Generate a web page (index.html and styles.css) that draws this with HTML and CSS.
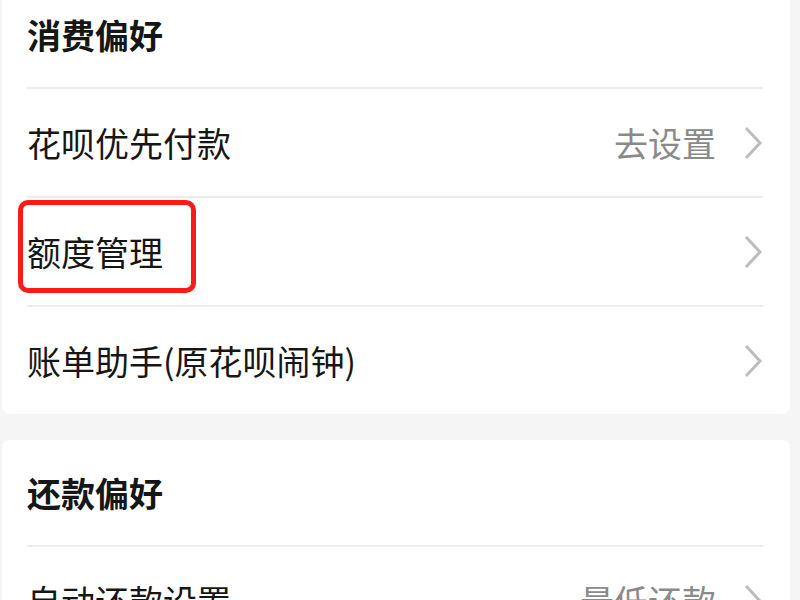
FILE: index.html
```html
<!DOCTYPE html>
<html lang="zh-CN">
<head>
	<meta charset="UTF-8">
	<title>设置</title>
	<link rel="stylesheet" href="styles.css">
</head>
<body>
	<!-- 消费偏好 -->
	<div class="card card_first">
		<div class="card_title">消费偏好</div>
		<div class="row">
			<span class="row_name">花呗优先付款</span>
			<span class="row_value">去设置</span>
			<svg class="arrow" width="20" height="34" viewBox="0 0 20 34"><polyline points="3,2 17,17 3,32" fill="none" stroke="#bdbdbd" stroke-width="3"/></svg>
		</div>
		<div class="row">
			<span class="row_name">额度管理</span>
			<span class="mark"></span>
			<svg class="arrow" width="20" height="34" viewBox="0 0 20 34"><polyline points="3,2 17,17 3,32" fill="none" stroke="#bdbdbd" stroke-width="3"/></svg>
		</div>
		<div class="row">
			<span class="row_name">账单助手(原花呗闹钟)</span>
			<svg class="arrow" width="20" height="34" viewBox="0 0 20 34"><polyline points="3,2 17,17 3,32" fill="none" stroke="#bdbdbd" stroke-width="3"/></svg>
		</div>
	</div>
	<!-- 还款偏好 -->
	<div class="card">
		<div class="card_title">还款偏好</div>
		<div class="row">
			<span class="row_name">自动还款设置</span>
			<span class="row_value">最低还款</span>
			<svg class="arrow" width="20" height="34" viewBox="0 0 20 34"><polyline points="3,2 17,17 3,32" fill="none" stroke="#bdbdbd" stroke-width="3"/></svg>
		</div>
	</div>
</body>
</html>
```
FILE: styles.css
```css
*{
	margin: 0;
	padding: 0;
}
body{
	background: #f5f5f5;
	font-family: "Noto Sans CJK SC", "Noto Sans", sans-serif;
	color: #161616;
	overflow: hidden;
}
.card{
	background: #fff;
	margin: 0 10px 0 2px;
	padding: 0 27px 0 25px;
	border-radius: 8px;
}
.card_first{
	margin-top: -18px;
	margin-bottom: 26px;
	border-radius: 0 0 8px 8px;
}
.card_title{
	height: 105px;
	display: flex;
	align-items: center;
	font-size: 34px;
	font-weight: bold;
}
.row{
	position: relative;
	height: 107px;
	border-top: 2px solid #ededed;
	display: flex;
	align-items: center;
}
.row_name{
	flex: 1;
	font-size: 34px;
}
.row_value{
	font-size: 34px;
	color: #8a8a8a;
	margin-right: 27px;
}
.arrow{
	display: block;
}
/* 红色标注框 */
.mark{
	position: absolute;
	left: -9px;
	top: 2px;
	width: 168px;
	height: 83px;
	border: 5px solid #ff1a1a;
	border-radius: 10px;
}
```
